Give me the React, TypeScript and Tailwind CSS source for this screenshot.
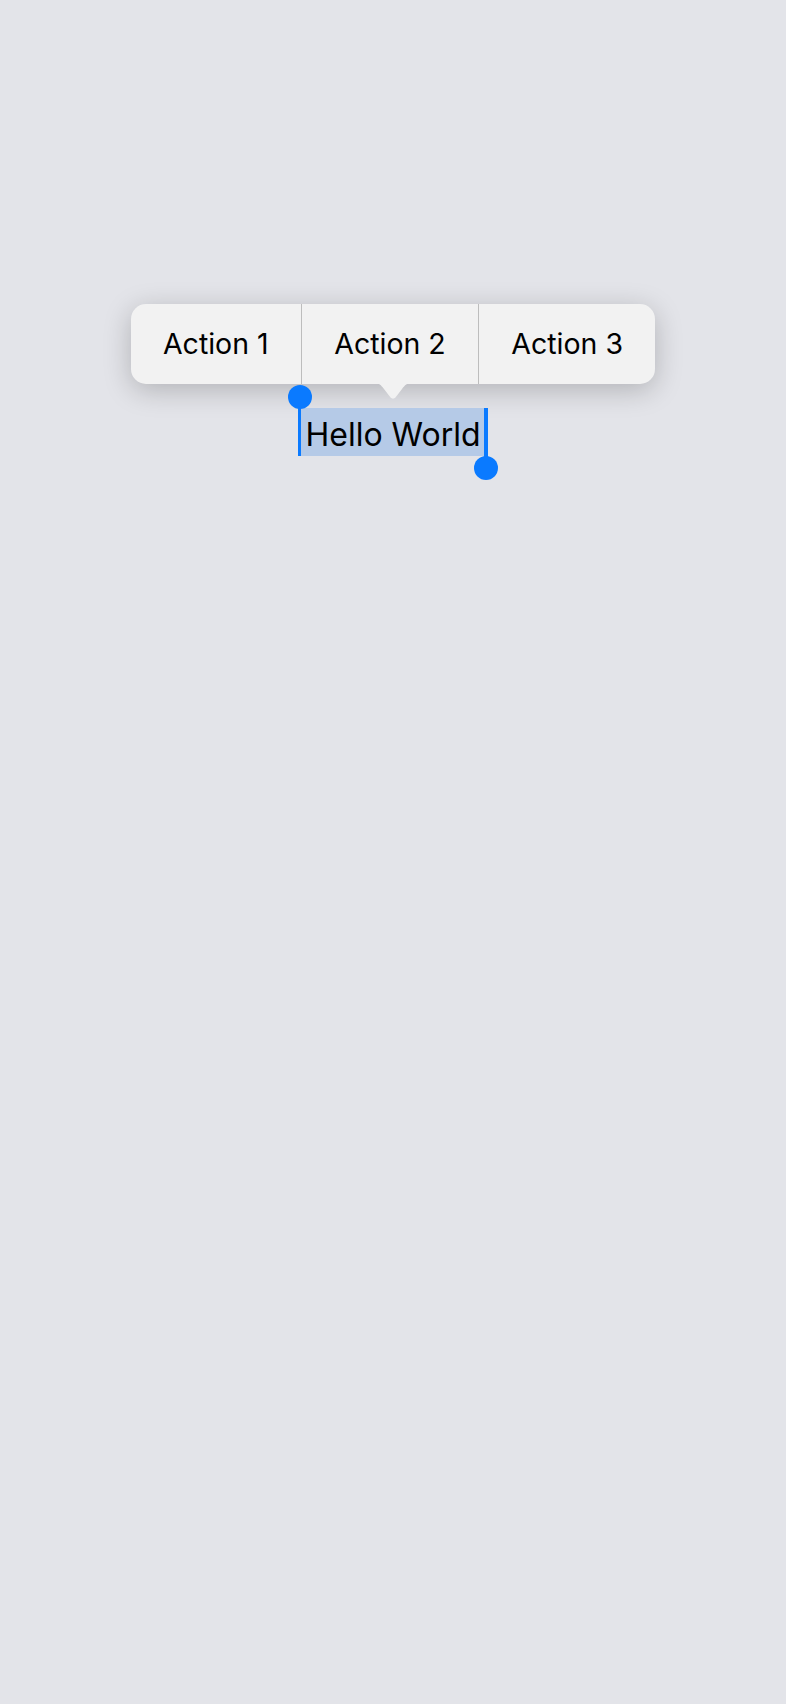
import React from 'react';

// iOS-style edit menu over a text selection
const actions = ['Action 1', 'Action 2', 'Action 3'];

export default function App() {
    return (
        <div
            className="min-h-screen w-full bg-[#e3e4e9] flex flex-col items-center pt-[304px]"
            style={{ fontFamily: 'Inter, "Noto Sans", sans-serif' }}
        >
            {/* Callout menu */}
            <div className="relative">
                <div className="flex h-[80px] rounded-[15px] bg-[#f2f2f2] shadow-[0_6px_28px_rgba(0,0,0,0.22)]">
                    {actions.map((a, i) => (
                        <div
                            key={a}
                            className={`flex items-center justify-center px-[32.3px] text-[28.5px] text-black ${i > 0 ? 'border-l border-[#bdbdbd]' : ''}`}
                        >
                            {a}
                        </div>
                    ))}
                </div>
                {/* Pointer */}
                <svg
                    className="absolute left-1/2 top-[79px] -translate-x-1/2"
                    width="38"
                    height="17"
                    viewBox="0 0 38 17"
                >
                    <path d="M0 0 H38 C33 0 31 2 28 6 L21.5 14.5 C20.3 16 17.7 16 16.5 14.5 L10 6 C7 2 5 0 0 0 Z" fill="#f2f2f2" />
                </svg>
            </div>

            {/* Selected text */}
            <div className="relative mt-[24px] flex h-[48px] w-[190px] items-center justify-center bg-[#b5cae7] pt-[5px]">
                <span className="text-[32px] leading-none text-black">Hello World</span>
                {/* start handle */}
                <div className="absolute left-0 top-[-11px] h-[59px] w-[3px] bg-[#0a7aff]" />
                <div className="absolute left-[-10.5px] top-[-23px] h-[24px] w-[24px] rounded-full bg-[#0a7aff]" />
                {/* end handle */}
                <div className="absolute right-0 top-0 h-[60px] w-[4px] bg-[#0a7aff]" />
                <div className="absolute right-[-10px] top-[48px] h-[24px] w-[24px] rounded-full bg-[#0a7aff]" />
            </div>
        </div>
    );
}
